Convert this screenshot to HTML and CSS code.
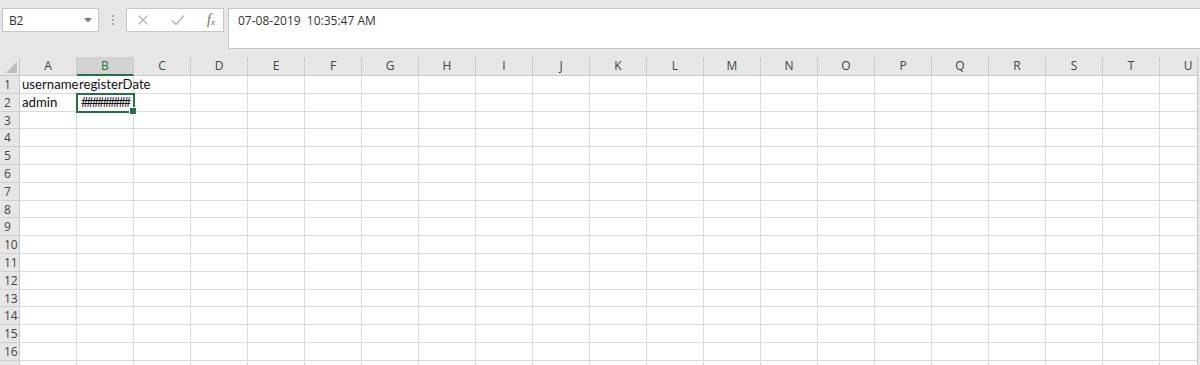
FILE: index.html
```html
<!DOCTYPE html>
<html lang="en">
<head>
<meta charset="utf-8">
<title>Sheet</title>
<link rel="stylesheet" href="styles.css">
</head>
<body>
<div class="app">
  <div class="topbar">
    <div class="namebox">
      <span class="namebox-text">B2</span>
      <svg class="caret" width="8" height="5" viewBox="0 0 8 5"><path d="M0 0H8L4 4.5Z" fill="#7a7a7a"/></svg>
    </div>
    <div class="grip"><span></span><span></span><span></span></div>
    <div class="fnbox">
      <svg class="ico" width="12" height="12" viewBox="0 0 12 12"><path d="M1.5 1.5L10.5 10.5M10.5 1.5L1.5 10.5" stroke="#b4b4b4" stroke-width="1.3" fill="none"/></svg>
      <svg class="ico" width="14" height="12" viewBox="0 0 14 12"><path d="M1 6.5L5 10.5L13 1.5" stroke="#b4b4b4" stroke-width="1.3" fill="none"/></svg>
      <span class="fx">f<sub>x</sub></span>
    </div>
    <div class="formula">07-08-2019  10:35:47 AM</div>
  </div>
  <div class="sheet">
    <div class="grid" id="grid">
      <div class="corner"><svg width="11" height="11" viewBox="0 0 11 11"><path d="M11 0V11H0Z" fill="#bdbdbd"/></svg></div>
      <div class="colhead">A</div>
      <div class="colhead sel">B</div>
      <div class="colhead">C</div>
      <div class="colhead">D</div>
      <div class="colhead">E</div>
      <div class="colhead">F</div>
      <div class="colhead">G</div>
      <div class="colhead">H</div>
      <div class="colhead">I</div>
      <div class="colhead">J</div>
      <div class="colhead">K</div>
      <div class="colhead">L</div>
      <div class="colhead">M</div>
      <div class="colhead">N</div>
      <div class="colhead">O</div>
      <div class="colhead">P</div>
      <div class="colhead">Q</div>
      <div class="colhead">R</div>
      <div class="colhead">S</div>
      <div class="colhead">T</div>
      <div class="colhead">U</div>
    </div>
    <div class="vscroll"></div>
  </div>
</div>
<script src="app.js"></script>
</body>
</html>
```

FILE: app.js
```js
(function () {
  var grid = document.getElementById('grid');
  var data = {
    1: { 0: 'username', 1: 'registerDate' },
    2: { 0: 'admin', 1: '#########' }
  };
  for (var r = 1; r <= 17; r++) {
    var h = document.createElement('div');
    h.className = 'rowhead';
    if (r <= 16) h.textContent = r;
    grid.appendChild(h);
    for (var c = 0; c < 21; c++) {
      var cell = document.createElement('div');
      cell.className = 'cell';
      if (data[r] && data[r][c]) {
        cell.textContent = data[r][c];
        if (r === 1 && c === 0) cell.className += ' spill';
      }
      if (r === 2 && c === 1) {
        cell.className += ' active';
        var handle = document.createElement('span');
        handle.className = 'handle';
        cell.appendChild(handle);
      }
      grid.appendChild(cell);
    }
  }
})();
```

FILE: styles.css
```css
* { box-sizing: border-box; }
html, body { margin: 0; padding: 0; }
body {
  background: #e6e6e6;
  width: 1200px;
  height: 365px;
  overflow: hidden;
  font-family: "Open Sans", "Noto Sans", sans-serif;
}
.app { display: flex; flex-direction: column; height: 365px; }

.topbar {
  height: 57px;
  display: flex;
  align-items: flex-start;
  padding-top: 8px;
  flex-shrink: 0;
}
.namebox {
  margin-left: 2px;
  width: 97px;
  height: 24px;
  background: #fff;
  border: 1px solid #c6c6c6;
  display: flex;
  align-items: center;
  justify-content: space-between;
  padding: 0 6px 0 6px;
  font-size: 12px;
  color: #333;
}
.namebox-text { letter-spacing: -0.2px; }
.caret { margin-top: 1px; }
.grip {
  width: 27px;
  height: 24px;
  display: flex;
  flex-direction: column;
  align-items: center;
  justify-content: center;
  gap: 2px;
}
.grip span { width: 2px; height: 2px; background: #a8a8a8; display: block; }
.fnbox {
  width: 98px;
  height: 24px;
  background: #fff;
  border: 1px solid #c6c6c6;
  display: flex;
  align-items: center;
  justify-content: space-between;
  padding: 0 8px 0 10px;
}
.fx {
  font-family: "Liberation Serif", serif;
  font-style: italic;
  font-size: 14px;
  color: #6a6a6a;
  line-height: 1;
}
.fx sub { font-size: 9px; vertical-align: -1px; }
.formula {
  margin-left: 4px;
  flex: 1;
  height: 41px;
  background: #fff;
  border: 1px solid #c6c6c6;
  border-right: none;
  padding: 4px 0 0 9px;
  font-size: 12px;
  color: #333;
  white-space: pre;
  line-height: 16px;
}

.sheet {
  flex: 1;
  display: flex;
  overflow: hidden;
  background: #fff;
}
.grid {
  flex: 1;
  display: grid;
  grid-template-columns: 20px repeat(21, 57px);
  grid-template-rows: 19px repeat(17, 17.8px);
  overflow: hidden;
  align-content: start;
}
.corner {
  background: #e6e6e6;
  border-right: 1px solid #c8c8c8;
  border-bottom: 1px solid #c8c8c8;
  display: flex;
  align-items: flex-end;
  justify-content: flex-end;
  padding: 0 2px 2px 0;
}
.colhead {
  background: #e6e6e6;
  border-right: 1px solid #cdcdcd;
  border-bottom: 1px solid #c8c8c8;
  text-align: center;
  font-size: 12px;
  line-height: 18px;
  color: #444;
  font-family: "Open Sans", sans-serif;
}
.colhead.sel {
  background: #d3d3d3;
  color: #217346;
  border-bottom: 2px solid #217346;
}
.rowhead {
  background: #e6e6e6;
  border-right: 1px solid #c8c8c8;
  border-bottom: 1px solid #d0d0d0;
  font-size: 12px;
  color: #444;
  padding-left: 4px;
  line-height: 17px;
  font-family: "Open Sans", sans-serif;
}
.cell {
  position: relative;
  border-right: 1px solid #dadada;
  border-bottom: 1px solid #dadada;
  font-family: "Lato", "Open Sans", sans-serif;
  font-size: 13.2px;
  color: #111;
  line-height: 17px;
  padding-left: 2px;
  white-space: nowrap;
}
.cell.spill { border-right-color: transparent; }
.cell.active {
  outline: 2px solid #217346;
  outline-offset: -1px;
  z-index: 2;
  padding-left: 4px;
  font-size: 12.5px;
  letter-spacing: -1.9px;
  overflow: visible;
}
.handle {
  position: absolute;
  right: -4px;
  bottom: -4px;
  width: 6px;
  height: 6px;
  background: #217346;
  border: 1px solid #fff;
  box-sizing: content-box;
}
.vscroll {
  width: 3px;
  background: #e6e6e6;
  border-left: 1px solid #c8c8c8;
  flex-shrink: 0;
}
```
